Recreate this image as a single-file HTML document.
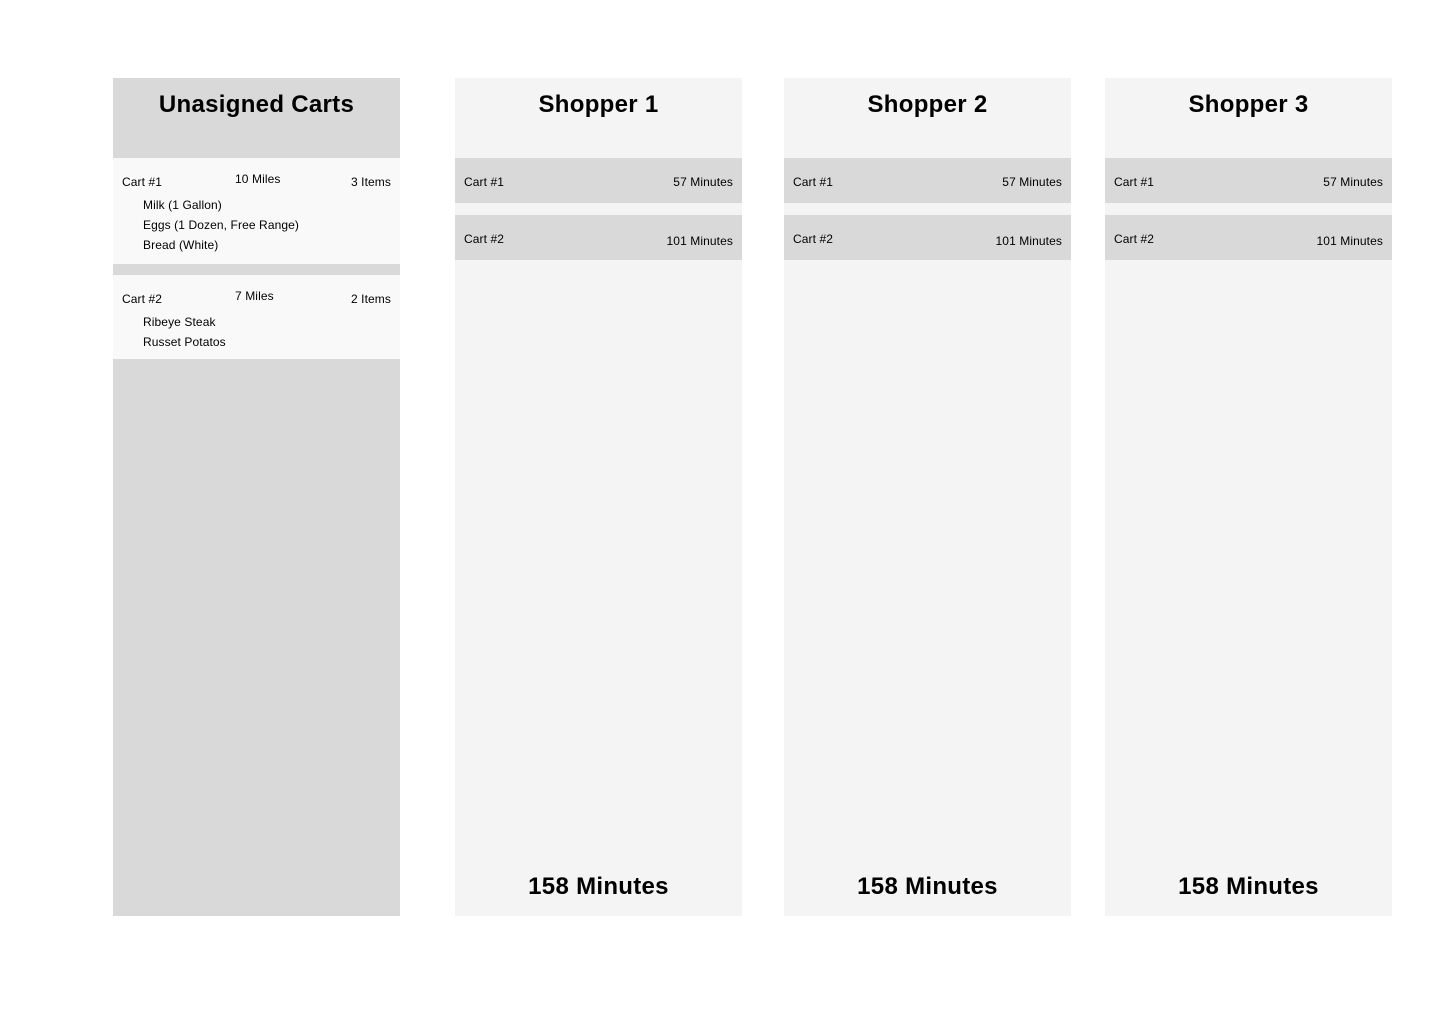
<!DOCTYPE html>
<html><head><meta charset="utf-8"><style>
*{margin:0;padding:0;box-sizing:border-box}
body{width:1440px;height:1024px;background:#fff;position:relative;overflow:hidden;font-family:"Liberation Sans",Arial,sans-serif;color:#000}
.col{position:absolute;top:78px;width:287px;height:838px;background:#f4f4f4}
.un{background:#d9d9d9}
.t{position:absolute;left:0;width:100%;text-align:center;font-weight:bold;font-size:24px;line-height:28px;top:13px;letter-spacing:0.3px}
.f{position:absolute;left:0;width:100%;text-align:center;font-weight:bold;font-size:24px;line-height:28px;top:795px;letter-spacing:0.3px}
.row{position:absolute;left:0;width:287px;height:45px;background:#d9d9d9}
.s{position:absolute;font-size:12px;line-height:14px;white-space:nowrap;letter-spacing:0.1px}
.card{position:absolute;left:0;width:287px;background:#f9f9f9}
</style></head><body>
<div class="col un" style="left:113px">
  <div class="t">Unasigned Carts</div>
  <div class="card" style="top:80px;height:106px">
    <div class="s" style="left:9px;top:17px">Cart #1</div>
    <div class="s" style="left:122px;top:14px">10 Miles</div>
    <div class="s" style="right:9px;top:17px">3 Items</div>
    <div class="s" style="left:30px;top:40px">Milk (1 Gallon)</div>
    <div class="s" style="left:30px;top:60px">Eggs (1 Dozen, Free Range)</div>
    <div class="s" style="left:30px;top:80px">Bread (White)</div>
  </div>
  <div class="card" style="top:197px;height:84px">
    <div class="s" style="left:9px;top:17px">Cart #2</div>
    <div class="s" style="left:122px;top:14px">7 Miles</div>
    <div class="s" style="right:9px;top:17px">2 Items</div>
    <div class="s" style="left:30px;top:40px">Ribeye Steak</div>
    <div class="s" style="left:30px;top:60px">Russet Potatos</div>
  </div>
</div>
<div class="col" style="left:455px">
  <div class="t">Shopper 1</div>
  <div class="row" style="top:80px"><div class="s" style="left:9px;top:17px">Cart #1</div><div class="s" style="right:9px;top:17px">57 Minutes</div></div>
  <div class="row" style="top:137px"><div class="s" style="left:9px;top:17px">Cart #2</div><div class="s" style="right:9px;top:19px">101 Minutes</div></div>
  <div class="f">158 Minutes</div>
</div>
<div class="col" style="left:784px">
  <div class="t">Shopper 2</div>
  <div class="row" style="top:80px"><div class="s" style="left:9px;top:17px">Cart #1</div><div class="s" style="right:9px;top:17px">57 Minutes</div></div>
  <div class="row" style="top:137px"><div class="s" style="left:9px;top:17px">Cart #2</div><div class="s" style="right:9px;top:19px">101 Minutes</div></div>
  <div class="f">158 Minutes</div>
</div>
<div class="col" style="left:1105px">
  <div class="t">Shopper 3</div>
  <div class="row" style="top:80px"><div class="s" style="left:9px;top:17px">Cart #1</div><div class="s" style="right:9px;top:17px">57 Minutes</div></div>
  <div class="row" style="top:137px"><div class="s" style="left:9px;top:17px">Cart #2</div><div class="s" style="right:9px;top:19px">101 Minutes</div></div>
  <div class="f">158 Minutes</div>
</div>
</body></html>
